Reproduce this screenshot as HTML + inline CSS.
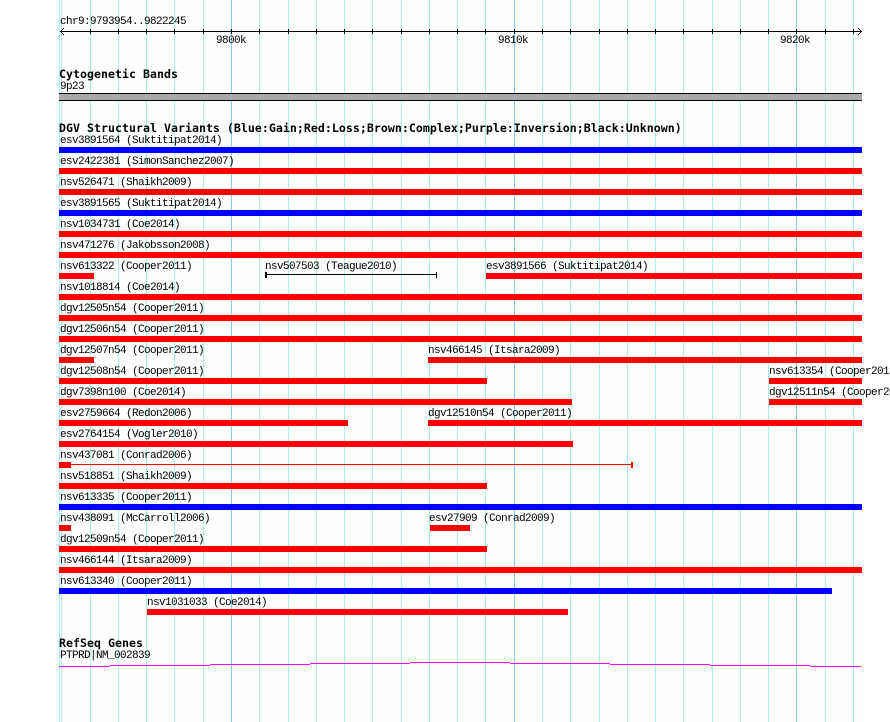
<!DOCTYPE html>
<html>
<head>
<meta charset="utf-8">
<style>
html,body{margin:0;padding:0;background:#fff;width:890px;height:722px;overflow:hidden}
svg{display:block}
text{font-family:"Liberation Mono",monospace;font-size:11px;letter-spacing:-0.6px;fill:#000;transform:translateY(-1px)}
text.b{font-family:"DejaVu Sans Mono",monospace;font-weight:bold;font-size:11.6px;letter-spacing:0.017px;transform:none}
</style>
</head>
<body>
<svg width="890" height="722" viewBox="0 0 890 722" xmlns="http://www.w3.org/2000/svg">
<g shape-rendering="crispEdges">
<rect x="59" y="0" width="803" height="722" fill="#fdfffd"/>
<g fill="#b0eeee">
<rect x="59" y="0" width="1" height="722"/><rect x="61" y="0" width="1" height="722"/><rect x="90" y="0" width="1" height="722"/><rect x="118" y="0" width="1" height="722"/><rect x="146" y="0" width="1" height="722"/><rect x="174" y="0" width="1" height="722"/><rect x="203" y="0" width="1" height="722"/><rect x="259" y="0" width="1" height="722"/><rect x="288" y="0" width="1" height="722"/><rect x="316" y="0" width="1" height="722"/><rect x="344" y="0" width="1" height="722"/><rect x="372" y="0" width="1" height="722"/><rect x="401" y="0" width="1" height="722"/><rect x="429" y="0" width="1" height="722"/><rect x="457" y="0" width="1" height="722"/><rect x="485" y="0" width="1" height="722"/><rect x="542" y="0" width="1" height="722"/><rect x="570" y="0" width="1" height="722"/><rect x="599" y="0" width="1" height="722"/><rect x="627" y="0" width="1" height="722"/><rect x="655" y="0" width="1" height="722"/><rect x="683" y="0" width="1" height="722"/><rect x="712" y="0" width="1" height="722"/><rect x="740" y="0" width="1" height="722"/><rect x="768" y="0" width="1" height="722"/><rect x="825" y="0" width="1" height="722"/><rect x="853" y="0" width="1" height="722"/>
</g>
<g fill="#88ccee">
<rect x="231" y="0" width="1" height="722"/><rect x="514" y="0" width="1" height="722"/><rect x="796" y="0" width="1" height="722"/>
</g>
<!-- axis -->
<g fill="#000">
<rect x="60" y="31" width="802" height="1"/>
<rect x="90" y="29" width="1" height="5"/><rect x="118" y="29" width="1" height="5"/><rect x="146" y="29" width="1" height="5"/><rect x="174" y="29" width="1" height="5"/><rect x="203" y="29" width="1" height="5"/><rect x="231" y="29" width="1" height="5"/><rect x="259" y="29" width="1" height="5"/><rect x="288" y="29" width="1" height="5"/><rect x="316" y="29" width="1" height="5"/><rect x="344" y="29" width="1" height="5"/><rect x="372" y="29" width="1" height="5"/><rect x="401" y="29" width="1" height="5"/><rect x="429" y="29" width="1" height="5"/><rect x="457" y="29" width="1" height="5"/><rect x="485" y="29" width="1" height="5"/><rect x="514" y="29" width="1" height="5"/><rect x="542" y="29" width="1" height="5"/><rect x="570" y="29" width="1" height="5"/><rect x="599" y="29" width="1" height="5"/><rect x="627" y="29" width="1" height="5"/><rect x="655" y="29" width="1" height="5"/><rect x="683" y="29" width="1" height="5"/><rect x="712" y="29" width="1" height="5"/><rect x="740" y="29" width="1" height="5"/><rect x="768" y="29" width="1" height="5"/><rect x="796" y="29" width="1" height="5"/><rect x="825" y="29" width="1" height="5"/><rect x="853" y="29" width="1" height="5"/>
<rect x="61" y="30" width="1" height="1"/><rect x="61" y="32" width="1" height="1"/><rect x="62" y="29" width="1" height="1"/><rect x="62" y="33" width="1" height="1"/><rect x="63" y="28" width="1" height="1"/><rect x="63" y="34" width="1" height="1"/>
<rect x="860" y="30" width="1" height="1"/><rect x="860" y="32" width="1" height="1"/><rect x="859" y="29" width="1" height="1"/><rect x="859" y="33" width="1" height="1"/><rect x="858" y="28" width="1" height="1"/><rect x="858" y="34" width="1" height="1"/>
</g>
<!-- cytoband -->
<rect x="59" y="93" width="803" height="8" fill="#000"/>
<rect x="59" y="94" width="803" height="6" fill="#aaa8aa"/>
<!-- bars -->
<g fill="#00f">
<rect x="59" y="147" width="803" height="6"/>
<rect x="59" y="210" width="803" height="6"/>
<rect x="59" y="504" width="803" height="6"/>
<rect x="59" y="588" width="773" height="6"/>
</g>
<g fill="#f00">
<rect x="59" y="168" width="803" height="6"/>
<rect x="59" y="189" width="803" height="6"/>
<rect x="59" y="231" width="803" height="6"/>
<rect x="59" y="252" width="803" height="6"/>
<rect x="59" y="273" width="35" height="6"/>
<rect x="486" y="273" width="376" height="6"/>
<rect x="59" y="294" width="803" height="6"/>
<rect x="59" y="315" width="803" height="6"/>
<rect x="59" y="336" width="803" height="6"/>
<rect x="59" y="357" width="35" height="6"/>
<rect x="428" y="357" width="434" height="6"/>
<rect x="59" y="378" width="428" height="6"/>
<rect x="769" y="378" width="93" height="6"/>
<rect x="59" y="399" width="513" height="6"/>
<rect x="769" y="399" width="93" height="6"/>
<rect x="59" y="420" width="289" height="6"/>
<rect x="428" y="420" width="434" height="6"/>
<rect x="59" y="441" width="514" height="6"/>
<rect x="59" y="462" width="12" height="6"/>
<rect x="71" y="464" width="561" height="1"/>
<rect x="631" y="462" width="2" height="6"/>
<rect x="59" y="483" width="428" height="6"/>
<rect x="59" y="525" width="12" height="6"/>
<rect x="430" y="525" width="40" height="6"/>
<rect x="59" y="546" width="428" height="6"/>
<rect x="59" y="567" width="803" height="6"/>
<rect x="147" y="609" width="421" height="6"/>
</g>
<!-- thin black variant -->
<g fill="#000">
<rect x="265" y="274" width="172" height="1"/>
<rect x="265" y="272" width="2" height="6"/>
<rect x="436" y="272" width="1" height="6"/>
</g>
<!-- gene -->
<g fill="#f0f">
<rect x="59" y="666" width="51" height="1"/>
<rect x="110" y="665" width="100" height="1"/>
<rect x="210" y="664" width="100" height="1"/>
<rect x="310" y="663" width="100" height="1"/>
<rect x="410" y="662" width="100" height="1"/>
<rect x="510" y="663" width="100" height="1"/>
<rect x="610" y="664" width="100" height="1"/>
<rect x="710" y="665" width="100" height="1"/>
<rect x="810" y="666" width="51" height="1"/>
</g>
</g>
<text x="60" y="25">chr9:9793954..9822245</text>
<text x="216" y="44">9800k</text>
<text x="498" y="44">9810k</text>
<text x="780" y="44">9820k</text>
<text class="b" x="59" y="78">Cytogenetic Bands</text>
<text x="60" y="90">9p23</text>
<text class="b" x="59" y="132">DGV Structural Variants (Blue:Gain;Red:Loss;Brown:Complex;Purple:Inversion;Black:Unknown)</text>
<text x="60" y="144">esv3891564 (Suktitipat2014)</text>
<text x="60" y="165">esv2422381 (SimonSanchez2007)</text>
<text x="60" y="186">nsv526471 (Shaikh2009)</text>
<text x="60" y="207">esv3891565 (Suktitipat2014)</text>
<text x="60" y="228">nsv1034731 (Coe2014)</text>
<text x="60" y="249">nsv471276 (Jakobsson2008)</text>
<text x="60" y="270">nsv613322 (Cooper2011)</text>
<text x="265" y="270">nsv507503 (Teague2010)</text>
<text x="486" y="270">esv3891566 (Suktitipat2014)</text>
<text x="60" y="291">nsv1018814 (Coe2014)</text>
<text x="60" y="312">dgv12505n54 (Cooper2011)</text>
<text x="60" y="333">dgv12506n54 (Cooper2011)</text>
<text x="60" y="354">dgv12507n54 (Cooper2011)</text>
<text x="428" y="354">nsv466145 (Itsara2009)</text>
<text x="60" y="375">dgv12508n54 (Cooper2011)</text>
<text x="769" y="375">nsv613354 (Cooper2011)</text>
<text x="60" y="396">dgv7398n100 (Coe2014)</text>
<text x="769" y="396">dgv12511n54 (Cooper2011)</text>
<text x="60" y="417">esv2759664 (Redon2006)</text>
<text x="428" y="417">dgv12510n54 (Cooper2011)</text>
<text x="60" y="438">esv2764154 (Vogler2010)</text>
<text x="60" y="459">nsv437081 (Conrad2006)</text>
<text x="60" y="480">nsv518851 (Shaikh2009)</text>
<text x="60" y="501">nsv613335 (Cooper2011)</text>
<text x="60" y="522">nsv438091 (McCarroll2006)</text>
<text x="429" y="522">esv27909 (Conrad2009)</text>
<text x="60" y="543">dgv12509n54 (Cooper2011)</text>
<text x="60" y="564">nsv466144 (Itsara2009)</text>
<text x="60" y="585">nsv613340 (Cooper2011)</text>
<text x="147" y="606">nsv1031033 (Coe2014)</text>
<text class="b" x="59" y="647">RefSeq Genes</text>
<text x="60" y="659">PTPRD|NM_002839</text>
</svg>
</body>
</html>
